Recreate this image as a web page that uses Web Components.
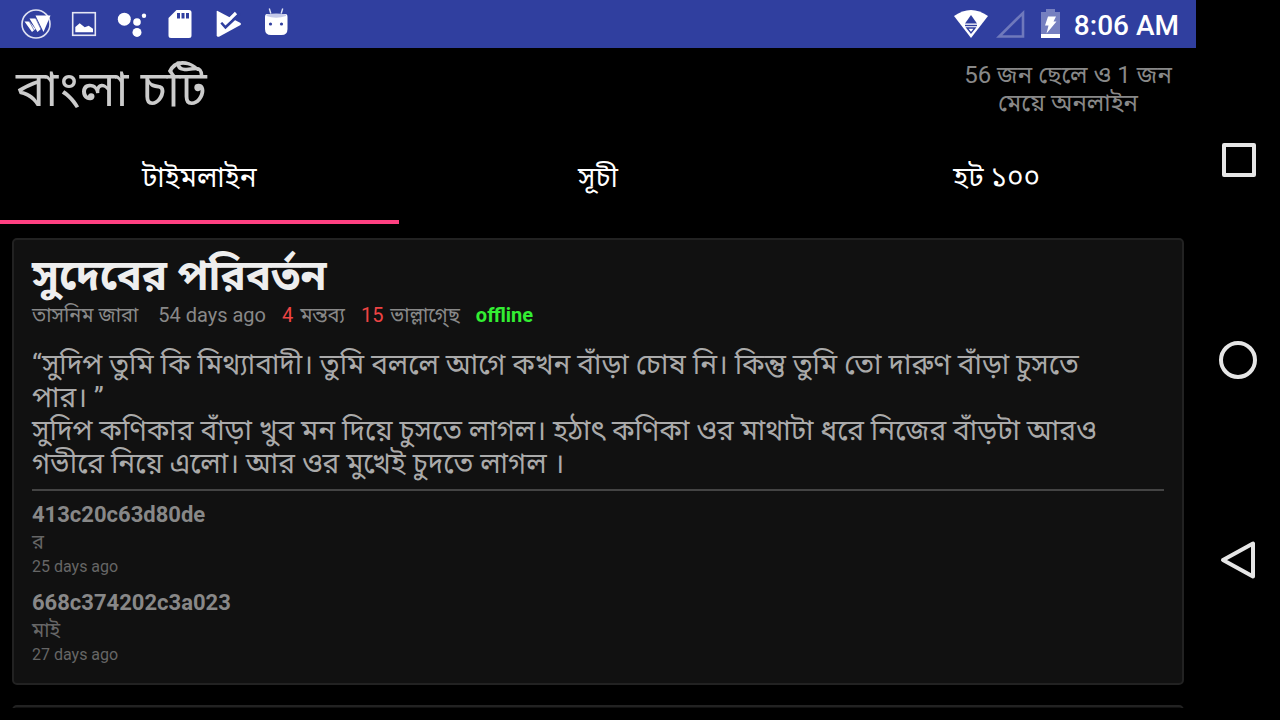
<!DOCTYPE html>
<html lang="bn">
<head>
<meta charset="utf-8">
<meta name="viewport" content="width=device-width, initial-scale=1">
<title>বাংলা চটি</title>
<style>
  html, body { height: 100%; }
  body {
    margin: 0;
    background: #000;
    color: #ccc;
    font-family: Roboto, "Noto Sans Bengali", "Noto Sans", sans-serif;
    overflow: hidden;
  }
</style>
</head>
<body>
<device-screen>
  <status-bar slot="status" time="8:06 AM"></status-bar>
  <app-header slot="header">
    বাংলা চটি
    <span slot="online">56 জন ছেলে ও 1 জন মেয়ে অনলাইন</span>
  </app-header>
  <tab-strip slot="tabs" tabs="টাইমলাইন,সূচী,হট ১০০"></tab-strip>
  <story-card author="তাসনিম জারা" posted="54 days ago" comments="4" likes="15" state="offline">
    <span slot="title">সুদেবের পরিবর্তন</span>
    “সুদিপ তুমি কি মিথ্যাবাদী। তুমি বললে আগে কখন বাঁড়া চোষ নি। কিন্তু তুমি তো দারুণ বাঁড়া চুসতে পার। ”<br>
    সুদিপ কণিকার বাঁড়া খুব মন দিয়ে চুসতে লাগল। হঠাৎ কণিকা ওর মাথাটা ধরে নিজের বাঁড়টা আরও গভীরে নিয়ে এলো। আর ওর মুখেই চুদতে লাগল ।
    <user-comment slot="comments" user="413c20c63d80de" posted="25 days ago">র</user-comment>
    <user-comment slot="comments" user="668c374202c3a023" posted="27 days ago">মাই</user-comment>
  </story-card>
  <story-card empty></story-card>
  <nav-keys slot="nav"></nav-keys>
</device-screen>

<script>
class DeviceScreen extends HTMLElement {
  constructor() {
    super();
    this.attachShadow({ mode: 'open' });
    this.shadowRoot.innerHTML = `
      <style>
        :host { display: flex; height: 100vh; }
        .app { flex: 1; min-width: 0; display: flex; flex-direction: column; }
        main {
          flex: 1;
          min-height: 0;
          display: flex;
          flex-direction: column;
          gap: 20px;
          margin: 14px 12px 12px;
          overflow: hidden;
        }
      </style>
      <div class="app">
        <slot name="status"></slot>
        <slot name="header"></slot>
        <slot name="tabs"></slot>
        <main><slot></slot></main>
      </div>
      <slot name="nav"></slot>
    `;
  }
}

class StatusBar extends HTMLElement {
  constructor() {
    super();
    this.attachShadow({ mode: 'open' });
    this.shadowRoot.innerHTML = `
      <style>
        :host {
          display: flex;
          align-items: center;
          justify-content: space-between;
          height: 48px;
          padding: 0 17px 0 20px;
          background: #303f9f;
          color: #fff;
        }
        .group { display: flex; align-items: center; gap: 16px; }
        .system { gap: 8px; }
        svg { display: block; height: 32px; fill: #fff; }
        time { font-size: 28px; font-weight: 500; line-height: 44px; padding-top: 4px; }
      </style>
      <div class="group">
        <svg viewBox="0 0 32 32" aria-hidden="true">
          <circle cx="16" cy="16" r="14" fill="none" stroke="#dfe2f2" stroke-width="1.6"/>
          <path d="M4.500 13.500h5l6 7.500-3.500 3zM9.500 10.500h6.500l5 10.500-3.500 3zM15.500 7.500h15l-7 16.500z"/>
          <path d="M9 13l5 9M15.300 9.500l6 12.500" stroke="#303f9f" stroke-width=".6" fill="none"/>
        </svg>
        <svg viewBox="0 0 32 32" aria-hidden="true">
          <rect x="4.700" y="4.700" width="22.600" height="22.600" fill="none" stroke="#e4e6f4" stroke-width="1.600"/>
          <path d="M7.300 24.300V19l4.400-3.700 5 4 4-1.500 4.300 3v3.500z"/>
        </svg>
        <svg viewBox="0 0 32 32" aria-hidden="true">
          <circle cx="8.300" cy="11.200" r="6.500"/><circle cx="21" cy="14" r="3.800"/>
          <circle cx="28" cy="7.800" r="2.200"/><circle cx="21" cy="24.400" r="4.500"/>
        </svg>
        <svg viewBox="0 0 32 32" aria-hidden="true">
          <path fill-rule="evenodd" d="M12.500 2H25a2.500 2.500 0 0 1 2.500 2.500v23A2.500 2.500 0 0 1 25 30H7a2.500 2.500 0 0 1-2.500-2.500V10zM13 5v5.500h3V5zm4.500 0v5.500h3V5zM22 5v5.500h3V5z"/>
        </svg>
        <svg viewBox="0 0 32 32" aria-hidden="true">
          <path d="M4.700 3.500q0-1 1-.5L28.500 15q1 1 0 2L7 28.700q-2.300.5-2.300-1.500z"/>
          <path d="M9.500 14.500l4 4.500L28 5.500" fill="none" stroke="#303f9f" stroke-width="3"/>
          <path d="M10.500 12l3 3.300L24 5" fill="none" stroke="#fff" stroke-width="3.200"/>
        </svg>
        <svg viewBox="0 0 32 32" aria-hidden="true">
          <path d="M5 9q0-3 2-3h18.500q2 0 2 3v12q0 6-6 6H11q-6 0-6-6z"/>
          <path d="M6.500 6.500q9.500-2 19.500 0v1.500q-10 3.500-19.500 0z" fill="#c5cae9"/>
          <path d="M9.300.5l1.500 5M22.700.5l-1.500 5" stroke="#dfe2f2" stroke-width="1.400"/>
          <circle cx="10.500" cy="16" r="1.600" fill="#303f9f"/><circle cx="21.500" cy="16" r="1.600" fill="#303f9f"/>
        </svg>
      </div>
      <div class="group system">
        <svg viewBox="0 0 34 32" role="img" aria-label="Wi-Fi">
          <path d="M0 8Q17-4 34 8L17 30z"/>
          <path d="M17 7l6 8.500H11z" fill="#303f9f"/>
          <path d="M11 17.500h12" stroke="#303f9f" stroke-width="1.400"/>
          <path d="M13 20h8l-4 5z" stroke="#303f9f" stroke-width="1.400"/>
        </svg>
        <svg viewBox="0 0 30 32" role="img" aria-label="No signal">
          <path d="M27 5v23.500H3.200z" fill="none" stroke="#6f79bc" stroke-width="2.600"/>
        </svg>
        <svg viewBox="0 0 32 32" role="img" aria-label="Charging">
          <path d="M7 4h5V1h9v3h5v26H7z" fill="#7680c0"/>
          <path d="M7 26h19v4H7z"/>
          <path d="M14 8.500h8l-2.500 5h3L12.500 25.500l2-8H11z"/>
        </svg>
        <time></time>
      </div>
    `;
    this.shadowRoot.querySelector('time').textContent = this.getAttribute('time');
  }
}

class AppHeader extends HTMLElement {
  constructor() {
    super();
    this.attachShadow({ mode: 'open' });
    this.shadowRoot.innerHTML = `
      <style>
        :host {
          display: flex;
          align-items: center;
          justify-content: space-between;
          height: 78px;
          padding: 2px 16px 0;
        }
        h1 { margin: 0; padding-top: 2px; font-size: 49px; font-weight: 400; line-height: 76px; color: #ccc; }
        p { margin: 0; width: 224px; font-size: 24px; line-height: 28px; text-align: center; color: #888; }
      </style>
      <h1><slot></slot></h1>
      <p><slot name="online"></slot></p>
    `;
  }
}

class TabStrip extends HTMLElement {
  constructor() {
    super();
    this.attachShadow({ mode: 'open' });
    this.shadowRoot.innerHTML = `
      <style>
        :host { display: flex; height: 96px; }
        button {
          flex: 1;
          padding: 10px 0 0;
          border: 0;
          border-bottom: 4px solid transparent;
          background: none;
          color: #fff;
          font: inherit;
          font-size: 28px;
          cursor: pointer;
        }
        button[aria-selected="true"] { border-color: #ff4081; }
      </style>
    `;
    this.setAttribute('role', 'tablist');
    this.getAttribute('tabs').split(',').forEach((label, i) => {
      const button = document.createElement('button');
      button.type = 'button';
      button.setAttribute('role', 'tab');
      button.setAttribute('aria-selected', i === 0);
      button.textContent = label;
      button.addEventListener('click', () => this.select(button));
      this.shadowRoot.appendChild(button);
    });
  }

  select(selected) {
    this.shadowRoot.querySelectorAll('button').forEach(button => {
      button.setAttribute('aria-selected', button === selected);
    });
  }
}

class StoryCard extends HTMLElement {
  constructor() {
    super();
    this.attachShadow({ mode: 'open' });
    this.shadowRoot.innerHTML = `
      <style>
        :host {
          display: block;
          flex-shrink: 0;
          min-height: 80px;
          box-sizing: border-box;
          padding: 10px 18px 7px;
          border: 2px solid #222;
          border-radius: 5px;
          background: #111;
        }
        h2 { margin: 0; font-size: 42px; font-weight: 700; line-height: 51px; color: #eee; }
        .meta { display: flex; gap: 16px; font-size: 20px; line-height: 28px; color: #888; }
        .posted { padding-left: 4px; }
        .count { color: #e44; padding-right: 2px; }
        .state { color: #3e3; font-weight: 700; }
        .body { padding: 19px 28px 9px 0; font-size: 28px; line-height: 33px; color: #aaa; }
        hr { margin: 0 0 9px; border: 0; border-top: 2px solid #444; }
      </style>
    `;
    if (this.hasAttribute('empty')) return;

    const content = document.createElement('article');
    content.innerHTML = `
      <h2><slot name="title"></slot></h2>
      <div class="meta">
        <span>${this.getAttribute('author')}</span>
        <span class="posted">${this.getAttribute('posted')}</span>
        <span><span class="count">${this.getAttribute('comments')}</span> মন্তব্য</span>
        <span><span class="count">${this.getAttribute('likes')}</span> ভাল্লাগ্&zwj;ছে</span>
        <span class="state">${this.getAttribute('state')}</span>
      </div>
      <div class="body"><slot></slot></div>
      <hr>
      <slot name="comments"></slot>
    `;
    this.shadowRoot.appendChild(content);
  }
}

class UserComment extends HTMLElement {
  constructor() {
    super();
    this.attachShadow({ mode: 'open' });
    this.shadowRoot.innerHTML = `
      <style>
        :host { display: block; padding-bottom: 8px; }
        .user { font-size: 22px; font-weight: 700; line-height: 30px; color: #888; }
        .text { font-size: 20px; line-height: 24px; color: #666; }
        .posted { font-size: 16px; line-height: 26px; color: #666; }
      </style>
      <div class="user">${this.getAttribute('user')}</div>
      <div class="text"><slot></slot></div>
      <div class="posted">${this.getAttribute('posted')}</div>
    `;
  }
}

class NavKeys extends HTMLElement {
  constructor() {
    super();
    this.attachShadow({ mode: 'open' });
    this.shadowRoot.innerHTML = `
      <style>
        :host { display: flex; flex-direction: column; width: 84px; padding: 60px 0; box-sizing: border-box; background: #000; }
        button {
          flex: 1;
          display: flex;
          align-items: center;
          justify-content: center;
          padding: 0;
          border: 0;
          background: none;
          cursor: pointer;
        }
        svg { width: 40px; height: 40px; fill: none; stroke: #e6e6e6; stroke-width: 4; stroke-linejoin: round; }
      </style>
      <button type="button" aria-label="Recent apps"><svg viewBox="0 0 40 40"><path d="M6 5h30v30H6z"/></svg></button>
      <button type="button" aria-label="Home"><svg viewBox="0 0 40 40"><circle cx="20" cy="20" r="17"/></svg></button>
      <button type="button" aria-label="Back"><svg viewBox="0 0 40 40"><path d="M5 20 35 3.500v33z"/></svg></button>
    `;
  }
}

customElements.define('device-screen', DeviceScreen);
customElements.define('status-bar', StatusBar);
customElements.define('app-header', AppHeader);
customElements.define('tab-strip', TabStrip);
customElements.define('story-card', StoryCard);
customElements.define('user-comment', UserComment);
customElements.define('nav-keys', NavKeys);
</script>
</body>
</html>
